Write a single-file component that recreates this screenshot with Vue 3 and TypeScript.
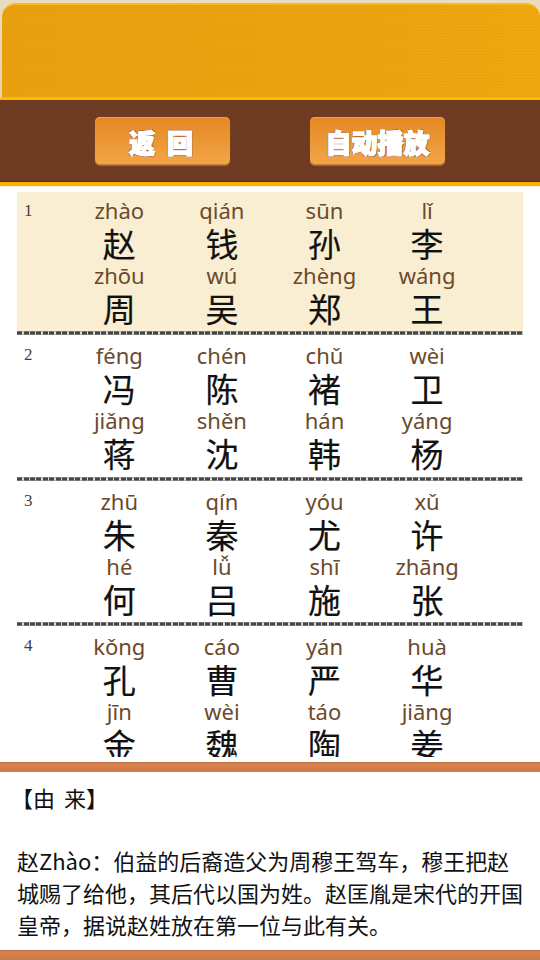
<script setup lang="ts">
interface Name {
  py: string
  zi: string
}

const groups: Name[][] = [
  [
    { py: 'zhào', zi: '赵' }, { py: 'qián', zi: '钱' }, { py: 'sūn', zi: '孙' }, { py: 'lǐ', zi: '李' },
    { py: 'zhōu', zi: '周' }, { py: 'wú', zi: '吴' }, { py: 'zhèng', zi: '郑' }, { py: 'wáng', zi: '王' }
  ],
  [
    { py: 'féng', zi: '冯' }, { py: 'chén', zi: '陈' }, { py: 'chǔ', zi: '褚' }, { py: 'wèi', zi: '卫' },
    { py: 'jiǎng', zi: '蒋' }, { py: 'shěn', zi: '沈' }, { py: 'hán', zi: '韩' }, { py: 'yáng', zi: '杨' }
  ],
  [
    { py: 'zhū', zi: '朱' }, { py: 'qín', zi: '秦' }, { py: 'yóu', zi: '尤' }, { py: 'xǔ', zi: '许' },
    { py: 'hé', zi: '何' }, { py: 'lǚ', zi: '吕' }, { py: 'shī', zi: '施' }, { py: 'zhāng', zi: '张' }
  ],
  [
    { py: 'kǒng', zi: '孔' }, { py: 'cáo', zi: '曹' }, { py: 'yán', zi: '严' }, { py: 'huà', zi: '华' },
    { py: 'jīn', zi: '金' }, { py: 'wèi', zi: '魏' }, { py: 'táo', zi: '陶' }, { py: 'jiāng', zi: '姜' }
  ]
]
</script>

<template>
  <div class="page">
    <div class="banner-wrap">
      <div class="banner"></div>
    </div>

    <div class="toolbar">
      <button class="btn btn-back">返 回</button>
      <button class="btn btn-auto">自动播放</button>
    </div>

    <div class="list">
      <div v-for="(group, i) in groups" :key="i" class="group" :class="{ active: i === 0 }">
        <div class="group-body">
          <span class="num">{{ i + 1 }}</span>
          <div class="names">
            <div v-for="n in group" :key="n.zi + n.py" class="name">
              <span class="py">{{ n.py }}</span>
              <span class="zi">{{ n.zi }}</span>
            </div>
          </div>
        </div>
        <div class="dash"></div>
      </div>
    </div>

    <div class="rule"></div>

    <div class="origin">
      <p class="origin-title">【由 来】</p>
      <p class="origin-text">赵Zhào：伯益的后裔造父为周穆王驾车，穆王把赵城赐了给他，其后代以国为姓。赵匡胤是宋代的开国皇帝，据说赵姓放在第一位与此有关。</p>
    </div>

    <div class="rule"></div>
  </div>
</template>

<style scoped>
.page {
  width: 540px;
  height: 960px;
  overflow: hidden;
  background: #fff;
  font-family: "Noto Sans", "Noto Sans CJK SC", sans-serif;
  display: flex;
  flex-direction: column;
}

.banner-wrap {
  height: 98px;
  flex: none;
  box-sizing: border-box;
  padding: 3px 0 0 2px;
  background: linear-gradient(#e9dcc0, #e6d3a4);
}

.banner {
  height: 95px;
  box-sizing: border-box;
  border-radius: 14px 14px 0 0;
  border-top: 2px solid #f6bb18;
  border-bottom: 1px solid #f8bd0c;
  background:
    repeating-linear-gradient(0deg, rgba(150, 85, 0, 0.04) 0 1px, transparent 1px 3px),
    linear-gradient(90deg, #e8a00f, #eba40f 60%, #efa80f);
}

.toolbar {
  height: 88px;
  flex: none;
  box-sizing: border-box;
  background: #6f3b22;
  border-top: 2px solid #fcbc05;
  border-bottom: 4px solid #f5b208;
  box-shadow: inset 0 -1px 0 #5a2f18, 0 1px 0 #fdf1d3;
  display: flex;
  align-items: flex-start;
  justify-content: space-between;
  padding: 17px 95px 0;
}

.btn {
  width: 135px;
  height: 48px;
  border: none;
  border-radius: 5px;
  padding: 0;
  background: linear-gradient(#e58722, #f3a648);
  box-shadow: 0 1px 1px #a8683a, inset 0 -1px 0 #c77f35, inset 0 1px 0 #eda257;
  color: #fff;
  font-family: "Noto Sans CJK SC", sans-serif;
  font-size: 26px;
  font-weight: 900;
  line-height: 41px;
  -webkit-text-stroke: 1.5px #fff;
  text-shadow: 1px 1px 0 #8e3f2b, -1px 1px 0 #8e3f2b, 1px -1px 0 #8e3f2b, -1px -1px 0 #8e3f2b;
}

.btn-back {
  letter-spacing: 3px;
}

.list {
  height: 565px;
  margin: 6px 0 5px;
  flex: none;
  overflow: hidden;
  padding: 0 17px;
}

.group {
  height: 145.5px;
  display: flex;
  flex-direction: column;
}

.group.active {
  height: 143px;
  background: #faeed2;
}

.group-body {
  flex: 1;
  display: flex;
  padding: 1px 0 0 7px;
}

.group.active .group-body {
  padding-top: 0;
}

.group.active .names {
  margin-top: -1px;
}

.num {
  width: 44px;
  flex: none;
  margin-top: 10px;
  font-family: "Liberation Serif", serif;
  font-size: 17px;
  line-height: 18px;
  color: #3f3f3f;
}

.names {
  display: grid;
  grid-template-columns: repeat(4, 102.6px);
  grid-auto-rows: 65px;
}

.name {
  display: flex;
  flex-direction: column;
  align-items: center;
}

.py {
  flex: none;
  margin-top: 6px;
  font-size: 22px;
  line-height: 26px;
  color: #6b4a2c;
}

.zi {
  flex: none;
  margin-top: 3px;
  font-family: "Noto Sans CJK SC", sans-serif;
  font-size: 33px;
  line-height: 34px;
  color: #111;
  -webkit-text-stroke: 0.2px #111;
}

.dash {
  height: 4px;
  flex: none;
  background: repeating-linear-gradient(90deg, #444 0 5px, #ddd 5px 6.5px);
  box-shadow: inset 0 1px 0 rgba(150, 150, 150, 0.6), inset 0 -1px 0 rgba(150, 150, 150, 0.6);
}

.rule {
  height: 10px;
  flex: none;
  background: linear-gradient(#b96d3f, #d8834f 20%, #d07c49 80%, #c97a48);
}

.origin {
  height: 178px;
  flex: none;
  box-sizing: border-box;
  padding: 9px 17px 0;
  color: #111;
  font-family: "Noto Sans CJK SC", sans-serif;
  font-size: 22px;
  line-height: 32px;
}

.origin p {
  margin: 0;
}

.origin-title {
  height: 63px;
  text-indent: -6px;
  word-spacing: 4px;
}
</style>

<style>
html,
body {
  margin: 0;
  background: #fff;
}
</style>
